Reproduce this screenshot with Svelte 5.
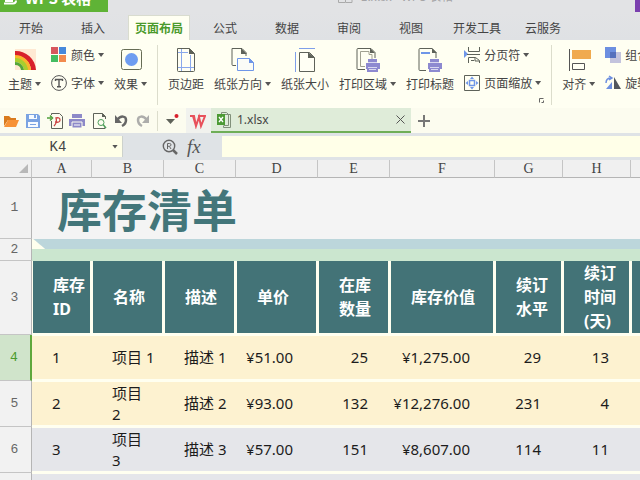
<script>
  const tabs = ['开始', '插入', '页面布局', '公式', '数据', '审阅', '视图', '开发工具', '云服务'];
  let active = $state('页面布局');
  let cellRef = $state('K4');
  let formula = $state('');

  const columns = [
    { id: 'A', width: 60, head: '库存\nID' },
    { id: 'B', width: 72, head: '名称' },
    { id: 'C', width: 72, head: '描述' },
    { id: 'D', width: 82, head: '单价' },
    { id: 'E', width: 72, head: '在库\n数量' },
    { id: 'F', width: 105, head: '库存价值' },
    { id: 'G', width: 68, head: '续订\n水平' },
    { id: 'H', width: 68, head: '续订\n时间\n(天)' },
    { id: 'I', width: 72, head: '' }
  ];
  const rows = [
    { n: 4, tone: 'warm', cells: ['1', '项目 1', '描述 1', '¥51.00', '25', '¥1,275.00', '29', '13', ''] },
    { n: 5, tone: 'warm', cells: ['2', '项目\n2', '描述 2', '¥93.00', '132', '¥12,276.00', '231', '4', ''] },
    { n: 6, tone: 'cool', cells: ['3', '项目\n3', '描述 3', '¥57.00', '151', '¥8,607.00', '114', '11', ''] },
    { n: 7, tone: 'cool', cells: ['', '', '', '', '', '', '', '', ''] }
  ];
</script>

{#snippet arrow()}<i class="arrow"></i>{/snippet}

<div class="app">
  <header class="titlebar">
    <div class="brand">
      <svg width="18" height="12" viewBox="0 0 18 12"><path d="M5 1h8M4 3.500h9q3 0 3-3" fill="none" stroke="#fff" stroke-width="2" /></svg>
      <b>WPS 表格</b>
    </div>
    <div class="doc">
      <svg width="15" height="14" viewBox="0 0 15 14" fill="none" stroke="#aaa"><path d="M.5 3.500h7v10h-7zM8 3.500h6v10H8M2 9.500h4M10 7.500h3M10 10.500h3" /></svg>
      <span>1.xlsx - WPS 表格</span>
    </div>
    <span class="user"></span>
  </header>

  <nav class="tabs">
    {#each tabs as t}
      <button class:on={t === active} onclick={() => (active = t)}>{t}</button>
    {/each}
  </nav>

  <section class="ribbon">
    <button class="big">
      <svg width="24" height="24" viewBox="0 0 24 24"><path d="M2 1h21v21H2z" fill="#ffe9d3" /><path d="M2 3a20 20 0 0 1 21 19h-5A15 15 0 0 0 2 8z" fill="#d8202c" /><path d="M2 7a16 16 0 0 1 16 15h-4A12 12 0 0 0 2 11z" fill="#f9b52c" /><path d="M2 10a13 13 0 0 1 13 12h-4A9 9 0 0 0 2 14z" fill="#a9ce2e" /><path d="M2 14a9 9 0 0 1 9 8H8a6 6 0 0 0-6-5z" fill="#55a63a" /></svg>
      <span>主题{@render arrow()}</span>
    </button>
    <div class="stack">
      <button><svg width="16" height="16" viewBox="0 0 16 16"><path d="M0 0h7v7H0z" fill="#d8575d" /><path d="M8 0h7v7H8z" fill="#4789db" /><path d="M0 8h7v7H0z" fill="#45bd62" /><path d="M8 8h7v7H8z" fill="#f28b4e" /></svg>颜色{@render arrow()}</button>
      <button><svg width="16" height="16" viewBox="0 0 16 16" fill="none" stroke="#555"><circle cx="8" cy="8" r="7.400" /><path d="M4.500 6V4.500h7V6M8 4.500v7M6 11.800h4" stroke-width="1.400" /></svg>字体{@render arrow()}</button>
    </div>
    <button class="big">
      <svg width="24" height="24" viewBox="0 0 24 24"><rect x="2.500" y="1.500" width="20" height="20" rx="2" fill="#fffff0" stroke="#666c55" /><circle cx="12.500" cy="11.500" r="6.500" fill="#6f9df0" /></svg>
      <span>效果{@render arrow()}</span>
    </button>
    <i class="rule"></i>
    <button class="big">
      <svg width="24" height="24" viewBox="0 0 24 24" fill="none"><path d="M3.500.5h12l5 5v17a1 1 0 0 1-1 1h-15a1 1 0 0 1-1-1z" fill="#fffff4" stroke="#5e6259" /><path d="M15 0l6 6h-6z" fill="#5e6259" /><path d="M7.500 1v22M16.500 7v16M4 4.500h10M4 19.500h16" stroke="#8aa8ec" /></svg>
      <span>页边距</span>
    </button>
    <button class="big">
      <svg width="24" height="24" viewBox="0 0 24 24" fill="none"><path d="M5 17.500H2a1 1 0 0 1-1-1V.5h10l4 4V8" stroke="#5e6259" /><path d="M10 0v6h6z" fill="#5e6259" /><path d="M6.500 10.500h12l4 4v8h-16z" fill="#fbfcf7" stroke="#6f96e8" /><path d="M18 10v5h5z" fill="#6f96e8" /></svg>
      <span>纸张方向{@render arrow()}</span>
    </button>
    <button class="big">
      <svg width="24" height="24" viewBox="0 0 24 24" fill="none"><path d="M2.500 4v20M6 .5h16" stroke="#7f9fea" /><path d="M6.500 4.500h10l5 5v14h-15z" fill="#fffff4" stroke="#5e6259" /><path d="M15 4v6h7z" fill="#5e6259" /></svg>
      <span>纸张大小</span>
    </button>
    <button class="big">
      <svg width="24" height="24" viewBox="0 0 24 24" fill="none"><path d="M9 21.500H2a1 1 0 0 1-1-1v-19a1 1 0 0 1 1-1h13l4 4V10" stroke="#5e6259" /><path d="M9 18.500H4.500v-15H13v3h3V11" stroke="#a1a191" /><path d="M14 0v5h5z" fill="#5e6259" /><path d="M12 11h9v4h3v6h-2v3H11v-3h-1v-6h2z" fill="#8d89d0" /><path d="M12 14.500h9M12 19.500h9M13 21.500h7" stroke="#d9d8f0" /></svg>
      <span>打印区域{@render arrow()}</span>
    </button>
    <button class="big">
      <svg width="24" height="24" viewBox="0 0 24 24" fill="none"><path d="M8 22.500H2a1 1 0 0 1-1-1v-20a1 1 0 0 1 1-1h12l4 4V10" stroke="#5e6259" /><path d="M14 0v5h5z" fill="#5e6259" /><path d="M3 5h9" stroke="#6f96e8" stroke-width="2" /><path d="M12 11h9v4h3v6h-2v3H11v-3h-1v-6h2z" fill="#8d89d0" /><path d="M12 14.500h9M12 19.500h9M13 21.500h7" stroke="#d9d8f0" /></svg>
      <span>打印标题</span>
    </button>
    <div class="stack">
      <button><svg width="16" height="16" viewBox="0 0 16 16" fill="none" stroke="#5e6259"><path d="M0 3l4 4-4 4z" fill="#6f96e8" stroke="none" /><path d="M4.500 0v4.500h11V0M3 7.500h13M4.500 16v-5.500h7l4 3V16M11 10.500V14h4M7 13.500h3" /></svg>分页符{@render arrow()}</button>
      <button><svg width="16" height="16" viewBox="0 0 16 16" fill="none"><path d="M.5.5h15v15H.5z" stroke="#5e6259" /><path d="M5.500 5.500h5v5h-5z" stroke="#6f96e8" stroke-width="1.500" /><path d="M8 1.500l2 2.500H6zM8 14.500l2-2.500H6zM1.500 8L4 6v4zM14.500 8L12 6v4z" fill="#6f96e8" /></svg>页面缩放{@render arrow()}</button>
    </div>
    <i class="rule"></i>
    <button class="big">
      <svg width="24" height="24" viewBox="0 0 24 24" fill="none"><path d="M2.500 1v22" stroke="#555" /><path d="M5 2h19v9H5z" fill="#f0aa4f" /><path d="M5.500 15.500h12v6h-12z" stroke="#555" fill="#fffff4" /></svg>
      <span>对齐{@render arrow()}</span>
    </button>
    <div class="stack">
      <button><svg width="16" height="16" viewBox="0 0 16 16"><path d="M5 5h11v11H5z" fill="#c3c3dd" /><path d="M0 0h11v11H0z" fill="#6d8fe0" /><path d="M5 5h6v6H5z" fill="#5570bd" /></svg>组合{@render arrow()}</button>
      <button><svg width="16" height="16" viewBox="0 0 16 16"><path d="M9 2l7 12H9z" fill="#53575d" /><path d="M7 7v7H1z" fill="#6d8fe0" /><path d="M1 8q0-5 5-5M4 1l3 2-3 2" fill="none" stroke="#6d8fe0" stroke-width="1.500" /></svg>旋转{@render arrow()}</button>
    </div>
    <button class="launcher" aria-label="页面设置"><svg width="5" height="5" viewBox="0 0 5 5" fill="none" stroke="#666"><path d="M.5 4.500v-4h4M2.500 4.500h2v-2" /></svg></button>
  </section>

  <section class="quick">
    <button aria-label="打开"><svg width="16" height="16" viewBox="0 0 16 16"><path d="M1 13V3h5l2 2h5v2H5z" fill="#d97a1d" /><path d="M5 7h11l-3 7H1z" fill="#f79236" /></svg></button>
    <button aria-label="保存"><svg width="16" height="16" viewBox="0 0 16 16"><path d="M1 1h12l2 2v12H1z" fill="#7ba3e2" /><path d="M4 2h8v4H4zM3 9h10v5H3z" fill="#f7fbff" /><path d="M9 2h2v3H9zM5 11h6v1H5z" fill="#7ba3e2" /></svg></button>
    <button aria-label="输出为PDF"><svg width="16" height="16" viewBox="0 0 16 16" fill="none"><path d="M4.500 2V.5h8l3 3v12h-11V8" stroke="#5e6259" /><path d="M7 13c2-2 3-5 2-8q4-1 4 2t-5 2" stroke="#c44" stroke-width="1.300" /><path d="M0 5h4M3 2.500L5.500 5 3 7.500" stroke="#4d9e3a" stroke-width="1.500" /></svg></button>
    <button aria-label="打印"><svg width="16" height="16" viewBox="0 0 16 16"><path d="M3 1h10v4H3zM0 6h16v7H0z" fill="#8d89c8" /><path d="M3 9h10v6H3z" fill="#8d89c8" stroke="#fffff0" /><path d="M5 12h6" stroke="#fff" /></svg></button>
    <button aria-label="打印预览"><svg width="16" height="16" viewBox="0 0 16 16" fill="none"><path d="M14 14v1.500H2.500V.5h9l3 3V6" stroke="#5e6259" /><path d="M11 0v4h4z" fill="#5e6259" /><circle cx="10" cy="9.500" r="3" stroke="#4d9e5a" /><path d="M12 11.500l3 3.500" stroke="#4d9e5a" stroke-width="1.500" /></svg></button>
    <button aria-label="撤销"><svg width="16" height="16" viewBox="0 0 16 16" fill="none"><path d="M4 7c4-5 9-4 9 0 0 3-2 5-4 6" stroke="#666" stroke-width="2.500" /><path d="M2 2v8h7z" fill="#666" /></svg></button>
    <button aria-label="恢复"><svg width="16" height="16" viewBox="0 0 16 16" fill="none"><path d="M12 7C8 2 3 3 3 7c0 3 2 5 4 6" stroke="#adadab" stroke-width="2.500" /><path d="M14 2v8H7z" fill="#adadab" /></svg></button>
    <i class="tick"></i>
    <button aria-label="更多"><svg width="16" height="16" viewBox="0 0 16 16"><path d="M2 6h9l-4.500 5z" fill="#5e6259" /><circle cx="12.500" cy="3" r="2" fill="#d8202c" /></svg></button>
    <button class="home" aria-label="WPS"><svg width="16" height="16" viewBox="0 0 16 16" fill="none" stroke="#e8505b" stroke-width="2"><path d="M0 3h4l2 10L9 4l2 9L15 3h-4M3 3l3 10M8 3h3" /></svg></button>
    <div class="file">
      <svg width="16" height="16" viewBox="0 0 16 16" fill="none"><path d="M5.500 2V.5h5l2 2v11h-5M9 2.500h5.500v13h-7V14" stroke="#81907a" /><path d="M1 2h8v11H1z" fill="#4c9a34" /><path d="M3 5l4 5M7 5l-4 5" stroke="#fff" stroke-width="1.300" /></svg>
      <span>1.xlsx</span>
      <button aria-label="关闭"><svg width="9" height="9" viewBox="0 0 9 9" stroke="#555"><path d="M.5.5l8 8M8.500.5l-8 8" /></svg></button>
    </div>
    <button class="add" aria-label="新建"><svg width="12" height="12" viewBox="0 0 12 12" stroke="#777" stroke-width="2"><path d="M6 0v12M0 6h12" /></svg></button>
  </section>

  <section class="formula">
    <div class="name">
      <input aria-label="名称框" bind:value={cellRef} />
      {@render arrow()}
    </div>
    <div class="tools">
      <svg width="16" height="16" viewBox="0 0 16 16" fill="none" stroke="#666"><circle cx="7" cy="7" r="5.700" stroke-width="1.400" /><path d="M11 11l4 4" stroke-width="2.500" /><path d="M5.500 10V4.500h2q1.500 0 1.500 1.300T7.500 7.300h-2M7.500 7.500L9 10" /></svg>
      <em>fx</em>
    </div>
    <input class="entry" aria-label="编辑栏" bind:value={formula} />
  </section>

  <main>
    <table>
      <colgroup>
        <col class="gutter" />
        {#each columns as c}<col style="width: {c.width}px" />{/each}
      </colgroup>
      <thead>
        <tr class="letters">
          <th class="num"><i class="corner"></i></th>
          {#each columns as c}<th>{c.id}</th>{/each}
        </tr>
      </thead>
      <tbody>
        <tr class="r1"><th class="num">1</th><td colspan={columns.length}>库存清单</td></tr>
        <tr class="r2"><th class="num">2</th><td colspan={columns.length}><div></div></td></tr>
        <tr class="r3">
          <th class="num">3</th>
          {#each columns as c}<th class="head">{c.head}</th>{/each}
        </tr>
        {#each rows as r}
          <tr class="data {r.tone}">
            <th class="num" class:sel={r.n === 4}>{r.n}</th>
            {#each r.cells as c, i}<td class:right={i > 2}>{c}</td>{/each}
          </tr>
        {/each}
      </tbody>
    </table>
  </main>
</div>

<style>
  :global(body) { overflow: hidden; }
  .app {
    display: flex;
    flex-direction: column;
    height: 100vh;
    overflow: hidden;
    background: #f2f2f2;
    color: #444;
    font: 12px/16px "Noto Sans CJK SC", sans-serif;
  }
  .app * { box-sizing: border-box; }
  .app svg { display: block; flex: none; }
  button {
    margin: 0;
    padding: 0;
    border: 0;
    background: none;
    color: inherit;
    font: inherit;
    white-space: nowrap;
  }
  input { border: 0; outline: 0; min-width: 0; }

  .titlebar {
    display: flex;
    justify-content: space-between;
    flex: none;
    height: 12px;
    overflow: hidden;
    background: #e2e3e5;
  }
  .brand {
    display: flex;
    align-items: flex-end;
    gap: 7px;
    width: 108px;
    background: #5fb336;
    color: #fff;
    font-size: 15px;
  }
  .brand b { padding-bottom: 6px; white-space: nowrap; }
  .doc {
    display: flex;
    align-items: flex-end;
    gap: 8px;
    padding: 0 0 9px 48px;
    color: #a5a5a7;
    font-size: 12px;
    white-space: nowrap;
  }
  .doc span { line-height: 14px; }
  .user { width: 5px; background: #7a3fae; }

  .tabs {
    display: flex;
    flex: none;
    gap: 8px;
    height: 28px;
    padding: 3px 0 0 4px;
    background: linear-gradient(#e2e3e5, #dfe1e4);
  }
  .tabs button { min-width: 54px; padding: 0 7px; }
  .tabs .on {
    background: #fffff2;
    border: 1px solid #d9dccf;
    border-bottom: 0;
    padding: 0 6px;
    color: #4b9a2c;
    font-weight: 700;
  }

  .ribbon {
    position: relative;
    display: flex;
    flex: none;
    gap: 10px;
    height: 68px;
    padding: 5px 0 0 8px;
    background: #fffff2;
    overflow: hidden;
  }
  .ribbon > * { flex: none; }
  .arrow {
    flex: none;
    width: 6px;
    height: 4px;
    background: #555;
    clip-path: polygon(0 0, 100% 0, 50% 100%);
  }
  .big {
    display: flex;
    flex-direction: column;
    align-items: center;
    gap: 4px;
    padding-top: 3px;
  }
  .big span, .stack button { display: flex; align-items: center; gap: 3px; }
  .stack svg { margin-right: 1px; }
  .stack { display: flex; flex-direction: column; gap: 12px; padding-top: 2px; }
  .rule { width: 1px; height: 60px; background: #dcddcc; }
  .launcher { position: absolute; left: 539px; top: 58px; }

  .quick {
    display: flex;
    align-items: center;
    flex: none;
    gap: 6px;
    height: 25px;
    padding-left: 3px;
    background: #fcfcef;
  }
  .tick { width: 1px; height: 20px; background: #dcddcc; }
  .home { align-self: stretch; padding: 0 5px 0 4px; background: #f1f2ee; }
  .file {
    display: flex;
    align-items: center;
    align-self: stretch;
    gap: 5px;
    width: 200px;
    margin-left: -6px;
    padding: 0 6px 0 5px;
    background: #dfecd9;
    border-bottom: 2px solid #6fae57;
    font: 12px/16px "Noto Sans", sans-serif;
  }
  .file span { flex: 1; }
  .add { padding-left: 1px; }

  .formula {
    display: flex;
    flex: none;
    height: 27px;
    padding: 3px 0;
    background: #dfe3e6;
  }
  .name {
    display: flex;
    align-items: center;
    width: 123px;
    padding-right: 4px;
    background: #ffffe8;
    border-right: 1px solid #cdd2cc;
  }
  .name input {
    flex: 1;
    padding: 0 0 0 4px;
    background: none;
    text-align: center;
    color: #444;
    font: 14px/16px "Liberation Mono", monospace;
  }
  .tools { display: flex; align-items: center; gap: 9px; width: 99px; padding-left: 39px; }
  .tools em { font: italic 19px/16px "Liberation Serif", serif; color: #555; }
  .entry { flex: 1; padding: 0 4px; background: #ffffe8; }

  main { flex: 1; min-height: 0; overflow: hidden; }
  table { width: 703px; table-layout: fixed; border-collapse: separate; border-spacing: 0; }
  th, td { padding: 0; }
  .gutter { width: 32px; }
  .letters { height: 18px; }
  .letters th {
    height: 18px;
    border-right: 1px solid #c5c5c5;
    border-bottom: 1px solid #b5b5b5;
    background: #f0f0f0;
    color: #444;
    font: 14px/16px "Liberation Serif", serif;
  }
  .num {
    padding-right: 2px;
    border-right: 1px solid #b5b5b5;
    border-bottom: 1px solid #c5c5c5;
    background: #f2f2f2;
    color: #666;
    font: 13px/16px "Liberation Mono", monospace;
  }
  .num.sel { background: #d0e4cb; color: #4b9a2c; border-right: 2px solid #5fa83c; }
  .corner {
    display: block;
    width: 9px;
    height: 9px;
    margin-left: 19px;
    background: #b8b8b8;
    clip-path: polygon(100% 0, 100% 100%, 0 100%);
  }
  .r1 { height: 61px; }
  .r1 td {
    padding-left: 25px;
    background: #f4f4f4;
    color: #43767a;
    font: bold 45px/60px "Noto Sans CJK SC", sans-serif;
  }
  .r2 { height: 22px; }
  .r2 td { vertical-align: top; background: #cbe6cf; }
  .r2 div { height: 10px; background: linear-gradient(40deg, #ffffee 8px, #bcd6db 9px); }
  .r3 { height: 74px; }
  .head {
    padding-left: 20px;
    border: 0 solid #fffff0;
    border-width: 0 2px 2px 1px;
    background: #437377;
    color: #fff;
    font: bold 16px/24px "Noto Sans", "Noto Sans CJK SC", sans-serif;
    text-align: left;
    white-space: pre;
  }
  .data { height: 46px; }
  .data td {
    padding-left: 20px;
    border: 0 solid #fffff0;
    border-width: 1px 0 2px;
    color: #1c1c1c;
    font: 15px/21px "Noto Sans", "Noto Sans CJK SC", sans-serif;
    white-space: pre;
  }
  .data .right { padding: 0 22px 0 0; text-align: right; }
  .data td:nth-child(5), .data td:nth-child(7) { padding-right: 25px; }
  .warm td { background: #fdf2d0; }
  .cool td { background: #e5e6ea; }
</style>
